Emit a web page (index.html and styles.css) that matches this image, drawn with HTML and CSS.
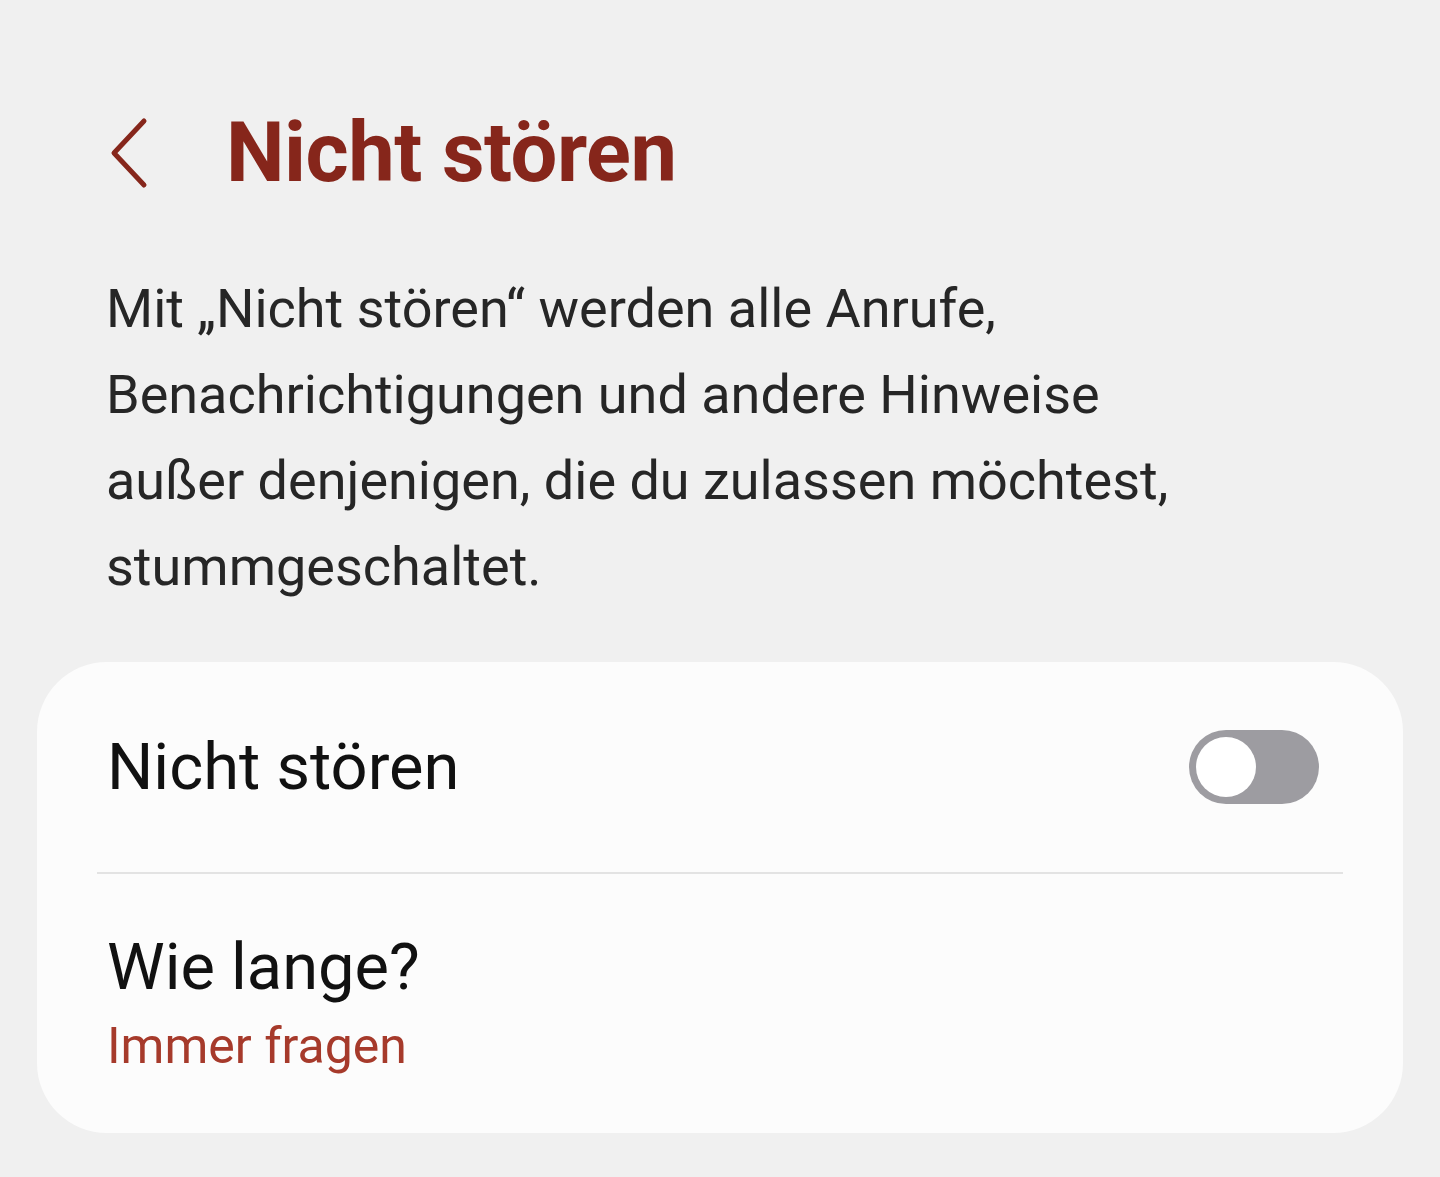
FILE: index.html
```html
<!DOCTYPE html>
<html>
  <head>
    <meta charset="utf-8">
    <title>Nicht stören</title>
    <meta name="viewport" content="width=device-width, initial-scale=1">
    <link rel="stylesheet" href="styles.css">
  </head>
  <body>
    <header class="top-bar">
      <button class="back-btn" aria-label="Zurück">
        <svg width="40" height="72" viewBox="0 0 40 72">
          <path d="M36 4 L6 36 L36 68" fill="none" stroke="#86261b" stroke-width="5" stroke-linecap="round" stroke-linejoin="round" />
        </svg>
      </button>
      <h1>Nicht stören</h1>
    </header>

    <p class="intro">
      Mit „Nicht stören“ werden alle Anrufe,<br>
      Benachrichtigungen und andere Hinweise<br>
      außer denjenigen, die du zulassen möchtest,<br>
      stummgeschaltet.
    </p>

    <!-- Settings card -->
    <section class="card">
      <div class="row">
        <span class="row-title">Nicht stören</span>
        <label class="switch">
          <input type="checkbox" />
          <span class="knob"></span>
        </label>
      </div>
      <div class="divider"></div>
      <div class="row row-sub">
        <span class="row-title">Wie lange?</span>
        <span class="row-value">Immer fragen</span>
      </div>
    </section>
  </body>
</html>
```

FILE: styles.css
```css
body {
  margin: 0;
  background: #f0f0f0;
  font-family: Roboto, "Noto Sans", sans-serif;
  color: #222;
}

.top-bar {
  display: flex;
  align-items: center;
  padding: 115px 0 0 108px;
  height: 75px;
}

.back-btn {
  background: none;
  border: none;
  padding: 0;
  width: 40px;
  height: 72px;
  margin-right: 78px;
}

.top-bar h1 {
  margin: 0;
  font-size: 83px;
  font-weight: 700;
  color: #86261b;
  letter-spacing: -0.5px;
}

.intro {
  margin: 76px 0 0 106px;
  font-size: 54px;
  line-height: 86px;
  color: #262626;
}

.card {
  margin: 52px 37px 0 37px;
  background: #fcfcfc;
  border-radius: 70px;
  padding: 0 60px;
  height: 471px;
  box-sizing: border-box;
}

.row {
  display: flex;
  align-items: center;
  justify-content: space-between;
  padding-left: 10px;
  height: 210px;
}

.row-title {
  font-size: 65px;
  color: #111;
}

.row-sub {
  flex-direction: column;
  align-items: flex-start;
  justify-content: center;
  gap: 12px;
  height: 250px;
  padding-top: 6px;
  box-sizing: border-box;
}

.row-value {
  font-size: 50px;
  color: #a63a2b;
}

.divider {
  height: 2px;
  background: #e3e3e3;
}

.switch {
  position: relative;
  width: 130px;
  height: 74px;
  border-radius: 37px;
  background: #9d9ca1;
  margin-right: 24px;
}

.switch input {
  display: none;
}

.knob {
  position: absolute;
  left: 7px;
  top: 7px;
  width: 60px;
  height: 60px;
  border-radius: 50%;
  background: #fff;
}
```
